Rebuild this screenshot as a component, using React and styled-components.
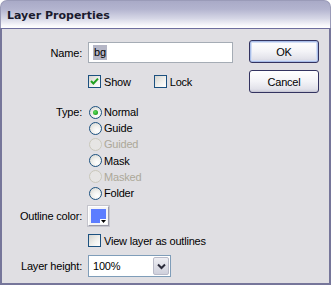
import React from 'react';
import styled, { createGlobalStyle } from 'styled-components';

const GlobalStyle = createGlobalStyle`
	html, body {
		margin: 0;
		padding: 0;
		background: #ffffff;
	}
	* {
		box-sizing: border-box;
	}
`;

const Window = styled.div`
	width: 331px;
	height: 287px;
	display: flex;
	flex-direction: column;
	font-family: 'Liberation Sans', Arial, sans-serif;
	font-size: 11px;
	letter-spacing: -0.2px;
	color: #000;
`;

const TitleBar = styled.div`
	height: 28px;
	flex: none;
	display: flex;
	align-items: center;
	padding: 1px 0 0 6px;
	border: 1px solid #9a9bb8;
	border-bottom: none;
	border-radius: 7px 7px 0 0;
	background: linear-gradient(#a9aac7 0%, #b3b4cf 30%, #d6d7e6 65%, #f7f7fb 90%, #ffffff 100%);
	font-family: 'DejaVu Sans', sans-serif;
	font-weight: bold;
	font-size: 11px;
	letter-spacing: 0;
	color: #1b1b2e;
`;

const Body = styled.div`
	flex: 1;
	display: flex;
	align-items: flex-start;
	padding: 13px 0 0 12px;
	background: #e0dfe3;
	border: 2px solid #76769a;
	border-top: 1px solid #6e6e9e;
	margin-bottom: 2px;
`;

const Form = styled.div`
	width: 219px;
	display: grid;
	grid-template-columns: 68px 1fr;
	column-gap: 6px;
	align-items: center;
`;

const Label = styled.div`
	text-align: right;
	white-space: nowrap;
	margin-top: ${(p) => p.$top || 0}px;
	align-self: ${(p) => (p.$start ? 'start' : 'center')};
	line-height: ${(p) => (p.$start ? '16px' : 'normal')};
`;

const Field = styled.div`
	margin-top: ${(p) => p.$top || 0}px;
	display: flex;
	align-items: center;
	gap: ${(p) => p.$gap || 0}px;
`;

const TextInput = styled.div`
	width: 145px;
	height: 21px;
	display: flex;
	align-items: center;
	padding-left: 4px;
	background: #fff;
	border: 1px solid #a5acb5;
`;

const Selected = styled.span`
	background: #b5b6c6;
	padding: 1px 1px 2px;
	line-height: 12px;
`;

const CheckItem = styled.label`
	display: flex;
	align-items: center;
	gap: 3px;
	height: 15px;
	color: ${(p) => (p.$disabled ? '#aca899' : '#000')};
`;

const Box = styled.span`
	width: 13px;
	height: 13px;
	flex: none;
	display: flex;
	align-items: center;
	justify-content: center;
	border: 1px solid #1c5180;
	background: linear-gradient(135deg, #d5d4cf 0%, #f2f2ef 60%, #ffffff 100%);
`;

const RadioList = styled.div`
	display: flex;
	flex-direction: column;
	margin-left: 1px;
	margin-top: 15px;
	align-self: start;
`;

const RadioItem = styled.label`
	display: flex;
	align-items: center;
	gap: 2px;
	height: 16.2px;
	color: ${(p) => (p.$disabled ? '#aca899' : '#000')};
`;

const Circle = styled.span`
	width: 13px;
	height: 13px;
	flex: none;
	border-radius: 50%;
	display: flex;
	align-items: center;
	justify-content: center;
	border: 1px solid ${(p) => (p.$disabled ? '#cac8bb' : '#1c5180')};
	background: ${(p) =>
		p.$disabled
			? '#e6e5e4'
			: 'radial-gradient(circle at 65% 70%, #ffffff 0%, #f2f2ef 40%, #d3d3cd 100%)'};
`;

const Dot = styled.span`
	width: 5px;
	height: 5px;
	border-radius: 50%;
	background: radial-gradient(circle at 40% 40%, #5fe05f 0%, #21a121 70%, #1a8a1a 100%);
`;

const Swatch = styled.div`
	position: relative;
	width: 21px;
	height: 20px;
	padding: 2px;
	border: 1px solid #9a9aa8;
	border-top-color: #ffffff;
	border-left-color: #ffffff;
	background: #f4f4f6;
	box-shadow: 0 0 0 1px #c4c4cc;
`;

const SwatchFill = styled.div`
	width: 100%;
	height: 100%;
	background: #5c7dff;
`;

const SwatchArrow = styled.svg`
	position: absolute;
	right: 1px;
	bottom: 1px;
`;

const Select = styled.div`
	width: 83px;
	height: 22px;
	display: flex;
	align-items: center;
	justify-content: space-between;
	padding: 1px 1px 1px 4px;
	background: #fff;
	border: 1px solid #7f9db9;
`;

const DropButton = styled.div`
	width: 16px;
	height: 18px;
	display: flex;
	align-items: center;
	justify-content: center;
	border: 1px solid #b9bac8;
	border-radius: 2px;
	background: linear-gradient(#eeeef3, #cfd0dc);
`;

const ButtonCol = styled.div`
	display: flex;
	flex-direction: column;
	gap: 7px;
	margin-left: 16px;
	margin-top: -2px;
`;

const Button = styled.div`
	width: 70px;
	height: 23px;
	display: flex;
	align-items: center;
	justify-content: center;
	border: 1px solid #333360;
	border-radius: 3px;
	background: linear-gradient(#ffffff 0%, #f3f3f7 50%, #e2e2ea 85%, #cdcdda 100%);
	box-shadow: ${(p) => (p.$default ? 'inset 0 0 0 1px #a8bde8, inset 0 0 0 2px #d4def4' : 'inset 0 -1px 0 #c9c9d6')};
`;

const Check = () => (
	<svg width='9' height='9' viewBox='0 0 9 9'>
		<path d='M1 4 L3.4 6.5 L8 1.6' fill='none' stroke='#21a121' strokeWidth='2' />
	</svg>
);

const Checkbox = ({ checked, children }) => (
	<CheckItem>
		<Box>{checked && <Check />}</Box>
		{children}
	</CheckItem>
);

const Radio = ({ checked, disabled, children }) => (
	<RadioItem $disabled={disabled}>
		<Circle $disabled={disabled}>{checked && <Dot />}</Circle>
		{children}
	</RadioItem>
);

const types = [
	{ name: 'Normal', checked: true },
	{ name: 'Guide' },
	{ name: 'Guided', disabled: true },
	{ name: 'Mask' },
	{ name: 'Masked', disabled: true },
	{ name: 'Folder' },
];

const App = () => (
	<>
		<GlobalStyle />
		<Window>
			<TitleBar>Layer Properties</TitleBar>
			<Body>
				<Form>
					<Label>Name:</Label>
					<TextInput>
						<Selected>bg</Selected>
					</TextInput>

					<span />
					<Field $top={11} $gap={23}>
						<Checkbox checked>Show</Checkbox>
						<Checkbox>Lock</Checkbox>
					</Field>

					<Label $top={15} $start>
						Type:
					</Label>
					<RadioList>
						{types.map((t) => (
							<Radio key={t.name} checked={t.checked} disabled={t.disabled}>
								{t.name}
							</Radio>
						))}
					</RadioList>

					<Label $top={5}>Outline color:</Label>
					<Field $top={5}>
						<Swatch>
							<SwatchFill />
							<SwatchArrow width='7' height='5' viewBox='0 0 7 5'>
								<rect width='7' height='5' fill='#ffffff' />
								<path d='M1 1 H6 L3.5 4 Z' fill='#000' />
							</SwatchArrow>
						</Swatch>
					</Field>

					<span />
					<Field $top={7}>
						<Checkbox>View layer as outlines</Checkbox>
					</Field>

					<Label $top={7}>Layer height:</Label>
					<Field $top={7}>
						<Select>
							100%
							<DropButton>
								<svg width='9' height='7' viewBox='0 0 9 7'>
									<path d='M1 1.5 L4.5 5 L8 1.5' fill='none' stroke='#2b2b3b' strokeWidth='2' />
								</svg>
							</DropButton>
						</Select>
					</Field>
				</Form>
				<ButtonCol>
					<Button $default>OK</Button>
					<Button>Cancel</Button>
				</ButtonCol>
			</Body>
		</Window>
	</>
);

export default App;
